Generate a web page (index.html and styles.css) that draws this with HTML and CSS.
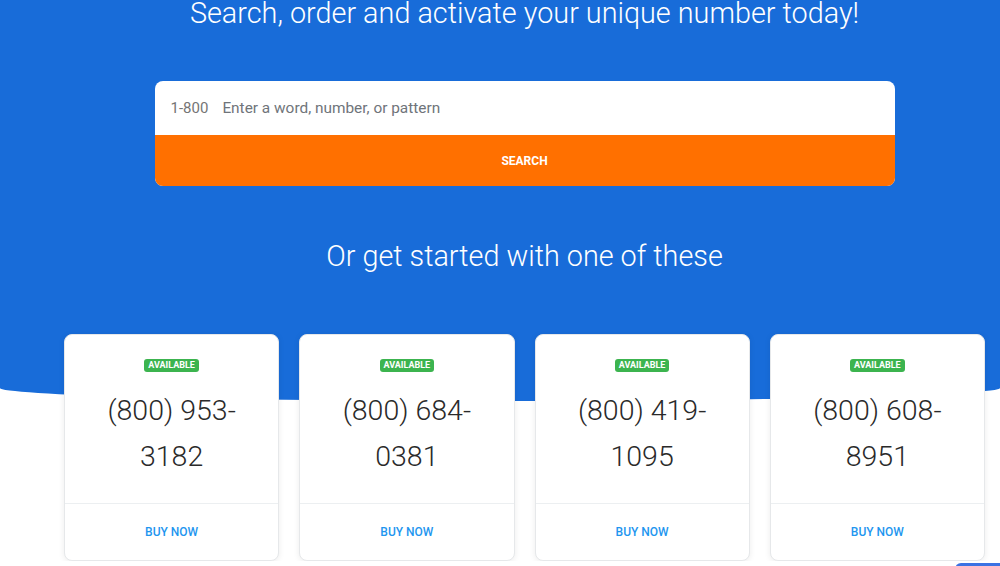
FILE: index.html
```html
<!DOCTYPE html>
<html lang="en">
<head>
    <meta charset="UTF-8">
    <meta name="viewport" content="width=device-width, initial-scale=1.0">
    <title>Find your number</title>
    <link rel="stylesheet" href="styles.css">
</head>
<body>
    <section class="hero">
        <div class="inner">
            <h1>Search, order and activate your unique number today!</h1>
            <form class="search" onsubmit="return false">
                <div class="search-field">
                    <span class="prefix">1-800</span>
                    <input type="text" placeholder="Enter a word, number, or pattern">
                </div>
                <button type="submit" class="search-btn">SEARCH</button>
            </form>
            <h2>Or get started with one of these</h2>
        </div>
    </section>

    <section class="numbers">
        <div class="cards">
            <div class="card">
                <div class="card-body">
                    <span class="badge">AVAILABLE</span>
                    <div class="phone">(800) 953-3182</div>
                </div>
                <a href="#" class="buy">BUY NOW</a>
            </div>
            <div class="card">
                <div class="card-body">
                    <span class="badge">AVAILABLE</span>
                    <div class="phone">(800) 684-0381</div>
                </div>
                <a href="#" class="buy">BUY NOW</a>
            </div>
            <div class="card">
                <div class="card-body">
                    <span class="badge">AVAILABLE</span>
                    <div class="phone">(800) 419-1095</div>
                </div>
                <a href="#" class="buy">BUY NOW</a>
            </div>
            <div class="card">
                <div class="card-body">
                    <span class="badge">AVAILABLE</span>
                    <div class="phone">(800) 608-8951</div>
                </div>
                <a href="#" class="buy">BUY NOW</a>
            </div>
        </div>
    </section>

    <div class="chat-tab"></div>
</body>
</html>
```

FILE: styles.css
```css
body {
    margin: 0;
    font-family: Roboto, "Liberation Sans", Arial, sans-serif;
    background-color: #fff;
    overflow: hidden;
}
.hero {
    background-color: #186cd9;
    color: #fff;
    padding-bottom: 128px;
    border-bottom-left-radius: 50% 13px;
    border-bottom-right-radius: 50% 13px;
}
.inner {
    padding-left: 49px;
    text-align: center;
}
h1, h2 {
    font-weight: 300;
    font-size: 28.8px;
    line-height: 34px;
    margin: 0;
}
h1 {
    margin-top: -4px;
}
h2 {
    margin-top: 53px;
}
.search {
    width: 740px;
    margin: 51px auto 0;
    border-radius: 8px;
    overflow: hidden;
    background: #fff;
}
.search-field {
    display: flex;
    align-items: center;
    height: 54px;
    padding: 0 16px;
}
.prefix {
    color: #757575;
    font-size: 15px;
    margin-right: 14px;
}
.search-field input {
    flex: 1;
    border: none;
    outline: none;
    font-family: inherit;
    font-size: 15.4px;
    color: #333;
    padding: 0;
}
.search-field input::placeholder {
    color: #6f747a;
}
.search-btn {
    display: block;
    width: 100%;
    height: 51px;
    border: none;
    background-color: #ff7000;
    color: #fff;
    font-family: inherit;
    font-weight: 700;
    font-size: 12px;
    cursor: pointer;
}
.numbers {
    margin-top: -67px;
    padding-left: 49px;
}
.cards {
    width: 921px;
    margin: 0 auto;
    display: grid;
    grid-template-columns: repeat(4, 1fr);
    gap: 20px;
}
.card {
    background: #fff;
    border: 1px solid #e6e8ea;
    border-radius: 8px;
    box-shadow: 0 1px 6px rgba(0, 0, 0, 0.08);
    display: flex;
    flex-direction: column;
    text-align: center;
}
.card-body {
    padding: 24px 24px 23px;
    border-bottom: 1px solid #eceff1;
}
.badge {
    display: block;
    width: fit-content;
    margin: 0 auto;
    height: 13px;
    line-height: 13px;
    padding: 0 4px;
    border-radius: 3px;
    background-color: #3cb44f;
    color: #fff;
    font-size: 9px;
    font-weight: 700;
}
.phone {
    margin-top: 16px;
    font-size: 28.5px;
    font-weight: 300;
    line-height: 46px;
    color: #2a2a2a;
}
.buy {
    display: block;
    height: 56px;
    line-height: 56px;
    color: #1e96ef;
    font-size: 12px;
    font-weight: 500;
    text-decoration: none;
}
.chat-tab {
    position: fixed;
    left: 955px;
    top: 563px;
    width: 70px;
    height: 40px;
    border-radius: 6px;
    background-color: #3b72e3;
}
```
